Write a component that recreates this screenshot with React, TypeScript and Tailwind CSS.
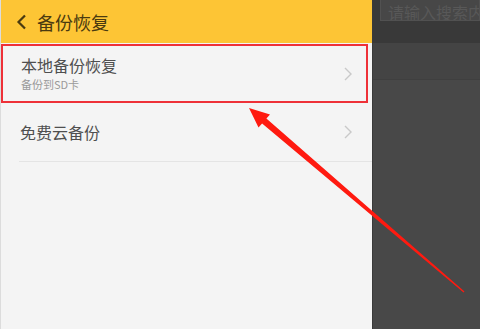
import React from 'react';

const font = { fontFamily: '"Noto Sans CJK SC", "Noto Sans", sans-serif' };

const Chevron: React.FC = () => (
  <svg width="8" height="14" viewBox="0 0 8 14" className="shrink-0">
    <path d="M1 1 L7 7 L1 13" fill="none" stroke="#c9c9c9" strokeWidth="1.4" />
  </svg>
);

const App: React.FC = () => {
  return (
    <div className="relative w-[480px] h-[329px] overflow-hidden flex" style={font}>
      {/* Left: settings panel */}
      <div className="w-[372px] shrink-0 h-full bg-[#f4f4f4] flex flex-col border-l border-[#dcdcdc]">
        <div className="h-[43px] bg-[#fdc535] flex items-center px-[14px] gap-[8px]">
          <svg width="14" height="18" viewBox="0 0 14 18">
            <path d="M10 2.5 L3.5 9 L10 15.5" fill="none" stroke="#4a3a10" strokeWidth="2.2" />
          </svg>
          <span className="text-[18px] text-[#4a3a10] leading-none">备份恢复</span>
        </div>

        <div className="h-[59px] mt-[1px] mr-[4px] border-2 border-[#ee3138] flex items-center pl-[18px] pr-[14px]">
          <div className="flex-1 flex flex-col">
            <span className="text-[16px] text-[#4f4f4f] leading-[18px]">本地备份恢复</span>
            <span className="text-[11px] text-[#9a9a9a] leading-[13px] mt-[4px]">备份到SD卡</span>
          </div>
          <Chevron />
        </div>

        <div className="h-[58px] flex items-center pl-[19px] pr-[20px]">
          <span className="flex-1 text-[16px] text-[#4f4f4f] leading-[20px]">免费云备份</span>
          <Chevron />
        </div>
        <div className="ml-[18px] h-px bg-[#e4e4e4]" />
      </div>

      {/* Right: dimmed background page */}
      <div className="flex-1 min-w-0 h-full bg-[#484848] flex flex-col border-l border-[#3a3a3a]">
        <div className="h-[43px] bg-[#393939] flex flex-col">
          <div className="h-[21px] ml-[7px] bg-[#474747] border border-[#515151] border-t-0 overflow-hidden flex items-end px-[7px]">
            <span className="text-[16px] text-[#585858] leading-[20px] whitespace-nowrap -mb-[2px]">请输入搜索内容</span>
          </div>
        </div>
        <div className="h-[37px] bg-[#444444] border-b border-[#3f3f3f]" />
      </div>

      {/* Annotation arrow */}
      <svg className="absolute inset-0 pointer-events-none" width="480" height="329" viewBox="0 0 480 329">
        <polygon
          points="249,108 270,114.5 266.4,118.6 464.5,291.5 463.6,292.6 262.1,123.5 258.5,127.5"
          fill="#ff1a10"
        />
      </svg>
    </div>
  );
};

export default App;
